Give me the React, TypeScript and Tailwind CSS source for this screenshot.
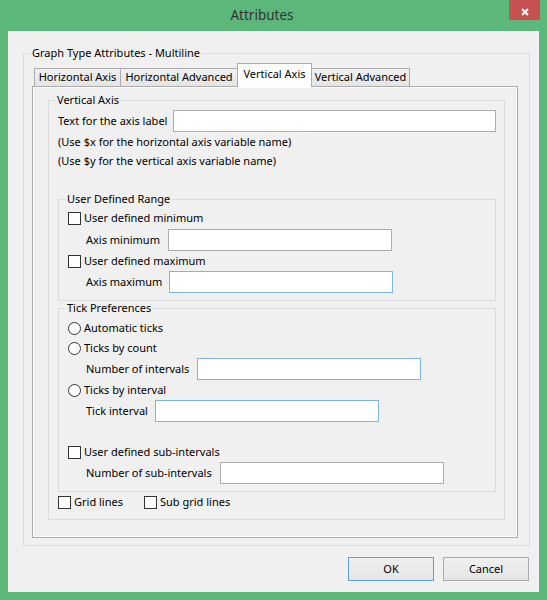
import React from 'react';

const Check = () => <span className="w-[13px] h-[13px] border border-[#333333] bg-white shrink-0" />;
const Radio = () => <span className="w-[13px] h-[13px] rounded-full border border-[#333333] bg-white shrink-0" />;

function Group({ title, className = '', children }: { title: string; className?: string; children: React.ReactNode }) {
  return (
    <fieldset className="border border-[#dcdcdc]">
      <legend className="ml-[6px] px-[2px] leading-[16px]">{title}</legend>
      <div className={className}>{children}</div>
    </fieldset>
  );
}

function TextBox({ w, blue = false }: { w: string; blue?: boolean }) {
  return (
    <input
      className={`h-[22px] ${w} border bg-white outline-none ${blue ? 'border-[#7eb4ea]' : 'border-[#abadb3]'}`}
    />
  );
}

// indented label + text box row
function Field({ label, labelW, blue = false, className = '' }: { label: string; labelW: string; blue?: boolean; className?: string }) {
  return (
    <div className={`h-[22px] flex items-center pl-[18px] ${className}`}>
      <span className={`${labelW} shrink-0 whitespace-nowrap`}>{label}</span>
      <TextBox w="w-[224px]" blue={blue} />
    </div>
  );
}

function CheckRow({ label, radio = false }: { label: string; radio?: boolean }) {
  return (
    <div className="h-[20px] flex items-center">
      {radio ? <Radio /> : <Check />}
      <span className="ml-[3px] whitespace-nowrap">{label}</span>
    </div>
  );
}

const tabs = [
  { name: 'Horizontal Axis', w: 'w-[87px]' },
  { name: 'Horizontal Advanced', w: 'w-[118px]' },
  { name: 'Vertical Axis', w: 'w-[75px]', active: true },
  { name: 'Vertical Advanced', w: 'w-[99px]' },
];

export default function App() {
  return (
    <div className="w-[547px] h-[600px] bg-[#5bb87a] flex flex-col font-['Noto_Sans',sans-serif] text-[11px] text-black">
      {/* Title bar */}
      <div className="h-[31px] flex items-start shrink-0">
        <div className="flex-1 pl-[15px] text-center text-[13.5px] leading-[31px] text-[#333333]">Attributes</div>
        <button className="w-[31px] h-[20px] mr-[7px] bg-[#c75050] flex items-center justify-center pt-[3px]">
          <svg width="8" height="8" viewBox="0 0 8 8">
            <path d="M1 1 L7 7 M7 1 L1 7" stroke="#ffffff" strokeWidth="2" />
          </svg>
        </button>
      </div>

      {/* Client area */}
      <div className="mx-[8px] mb-[8px] flex-1 bg-[#f0f0f0] flex flex-col">
        <fieldset className="mt-[14px] ml-[15px] mr-[9px] h-[501px] border border-[#dcdcdc]">
          <legend className="ml-[6px] px-[2px] leading-[16px]">Graph Type Attributes - Multiline</legend>

          <div className="mt-[2px] ml-[8px] mr-[11px]">
            {/* Tab strip */}
            <div className="h-[23px] flex items-end pl-[2px]">
              {tabs.map((t, i) => (
                <div
                  key={t.name}
                  className={`${t.w} ${i > 0 ? '-ml-px' : ''} border border-b-0 border-[#acacac] flex items-center justify-center whitespace-nowrap ${
                    t.active
                      ? 'h-[24px] -mb-px bg-white relative z-10 pb-[2px]'
                      : 'h-[18px] bg-gradient-to-b from-[#f0f0f0] to-[#e5e5e5]'
                  }`}
                >
                  {t.name}
                </div>
              ))}
            </div>

            {/* Tab page */}
            <div className="h-[452px] border border-[#acacac] bg-[#f0f0f0] shadow-[inset_0_0_0_1px_#ffffff] pt-[5px] pl-[15px] pr-[12px]">
              <Group title="Vertical Axis" className="pt-[2px] pl-[9px] pr-[8px] pb-[7px]">
                <div className="h-[22px] flex items-center">
                  <span className="w-[115px] shrink-0 whitespace-nowrap">Text for the axis label</span>
                  <TextBox w="flex-1 min-w-0" />
                </div>
                <div className="h-[19px] leading-[19px]">(Use $x for the horizontal axis variable name)</div>
                <div className="h-[19px] leading-[19px]">(Use $y for the vertical axis variable name)</div>

                <div className="mt-[21px]">
                  <Group title="User Defined Range" className="pl-[9px] pt-[1px] pb-[7px]">
                    <CheckRow label="User defined minimum" />
                    <Field label="Axis minimum" labelW="w-[82px]" className="mt-[1px]" />
                    <CheckRow label="User defined maximum" />
                    <Field label="Axis maximum" labelW="w-[83px]" blue />
                  </Group>
                </div>

                <div className="-mt-[1px]">
                  <Group title="Tick Preferences" className="pl-[9px] pt-[2px] pb-[7px]">
                    <CheckRow label="Automatic ticks" radio />
                    <CheckRow label="Ticks by count" radio />
                    <Field label="Number of intervals" labelW="w-[111px]" blue />
                    <CheckRow label="Ticks by interval" radio />
                    <Field label="Tick interval" labelW="w-[69px]" blue />
                    <div className="h-[20px]" />
                    <CheckRow label="User defined sub-intervals" />
                    <Field label="Number of sub-intervals" labelW="w-[134px]" />
                  </Group>
                </div>

                <div className="h-[20px] flex items-center">
                  <div className="w-[86px] flex items-center">
                    <Check />
                    <span className="ml-[3px]">Grid lines</span>
                  </div>
                  <div className="flex items-center">
                    <Check />
                    <span className="ml-[3px]">Sub grid lines</span>
                  </div>
                </div>
              </Group>
            </div>
          </div>
        </fieldset>

        {/* Buttons */}
        <div className="mt-[11px] h-[24px] flex justify-end gap-[9px] mr-[10px]">
          <button className="w-[86px] h-[24px] border border-[#5e9fdf] bg-gradient-to-b from-[#f0f0f0] to-[#e5e5e5]">OK</button>
          <button className="w-[86px] h-[24px] border border-[#acacac] bg-gradient-to-b from-[#f0f0f0] to-[#e5e5e5]">Cancel</button>
        </div>
      </div>
    </div>
  );
}
